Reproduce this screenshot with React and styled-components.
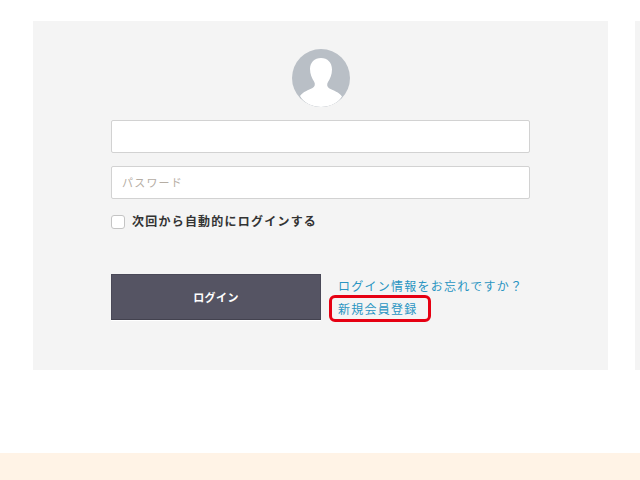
import styled, { createGlobalStyle } from "styled-components";

const GlobalStyle = createGlobalStyle`
  html, body {
    margin: 0;
    height: 100%;
    background: #fff;
    overflow: hidden;
    font-family: "Liberation Sans", "Noto Sans CJK JP", sans-serif;
  }
`;

const Page = styled.div`
  width: 640px;
  height: 480px;
  display: flex;
  flex-direction: column;
  overflow: hidden;
`;

const Columns = styled.div`
  display: flex;
  gap: 27px;
  padding: 21px 0 0 33px;
  height: 432px;
  box-sizing: border-box;
`;

const Panel = styled.section`
  flex: none;
  width: 575px;
  height: 349px;
  background: #f4f4f4;
  box-sizing: border-box;
  padding: 28px 78px 0;
  display: flex;
  flex-direction: column;
`;

const SidePanel = styled.aside`
  flex: none;
  width: 40px;
  height: 349px;
  background: #f4f4f4;
`;

const Avatar = styled.svg`
  display: block;
  width: 58px;
  height: 58px;
  margin: 0 auto 13px;
`;

const TextInput = styled.input`
  display: block;
  width: 100%;
  height: 33px;
  box-sizing: border-box;
  margin: 0 0 13px;
  padding: 0 10px 2px;
  background: #fff;
  border: 1px solid #d2d2d2;
  border-radius: 2px;
  font-size: 11px;
  letter-spacing: 1.2px;
  font-family: "Noto Sans CJK JP", sans-serif;
  outline: none;

  &::placeholder {
    color: #b5ada4;
    opacity: 1;
  }
`;

const RememberRow = styled.label`
  display: flex;
  align-items: flex-start;
  gap: 7px;
  height: 18px;
  line-height: 18px;
  font-size: 12px;
  font-weight: 700;
  letter-spacing: 1.22px;
  color: #333;
  font-family: "Noto Sans CJK JP", sans-serif;
`;

const CheckBox = styled.span`
  flex: none;
  width: 12px;
  height: 12px;
  margin-top: 3px;
  background: #fff;
  border: 1px solid #c4c4c4;
  border-radius: 3px;
`;

const Actions = styled.div`
  display: flex;
  gap: 17px;
  margin-top: 44px;
`;

const LoginButton = styled.button`
  flex: none;
  width: 210px;
  height: 46px;
  padding: 0;
  background: #555463;
  border: 1px solid #4a4958;
  border-bottom-color: #43424f;
  box-shadow: 0 1px 0 #fff;
  color: #fff;
  font-size: 11px;
  font-weight: 700;
  letter-spacing: 0.4px;
  font-family: "Noto Sans CJK JP", sans-serif;
`;

const LinkList = styled.div`
  display: flex;
  flex-direction: column;
  gap: 4px;
  padding-top: 2px;
`;

const HelpLink = styled.a`
  position: relative;
  display: block;
  font-size: 12px;
  line-height: 19px;
  letter-spacing: 1.25px;
  color: #2a95c2;
  font-family: "Noto Sans CJK JP", sans-serif;
  white-space: nowrap;
`;

const Highlight = styled.span`
  position: absolute;
  left: -9px;
  top: -4px;
  width: 102px;
  height: 27px;
  box-sizing: border-box;
  border: 3px solid #e60012;
  border-radius: 6px;
`;

const Footer = styled.footer`
  flex: 1;
  margin-top: 21px;
  background: #fff3e6;
`;

export default function App() {
  return (
    <Page>
      <GlobalStyle />
      <Columns>
        <Panel>
          <Avatar viewBox="0 0 58 58">
            <defs>
              <clipPath id="avatar-clip">
                <circle cx="29" cy="29" r="29" />
              </clipPath>
            </defs>
            <circle cx="29" cy="29" r="29" fill="#b9bfc6" />
            <g clipPath="url(#avatar-clip)" fill="#fff">
              <path d="M29 9c-6.500 0-11 4.500-11 11 0 5 2 9.500 4 12.500 1.500 2.500 1 5-1.500 6.500-4 2.200-9.500 3.500-12.500 8C12 54 20 58 29 58s17-4 21-10.500c-3-4.500-8.500-5.800-12.500-8-2.500-1.500-3-4-1.500-6.500 2-3 4-7.500 4-12.500C40 13.500 35.500 9 29 9z" />
            </g>
          </Avatar>
          <TextInput type="text" />
          <TextInput type="password" placeholder="パスワード" />
          <RememberRow>
            <CheckBox />
            次回から自動的にログインする
          </RememberRow>
          <Actions>
            <LoginButton>ログイン</LoginButton>
            <LinkList>
              <HelpLink>ログイン情報をお忘れですか？</HelpLink>
              <HelpLink>
                新規会員登録
                <Highlight />
              </HelpLink>
            </LinkList>
          </Actions>
        </Panel>
        <SidePanel />
      </Columns>
      <Footer />
    </Page>
  );
}
